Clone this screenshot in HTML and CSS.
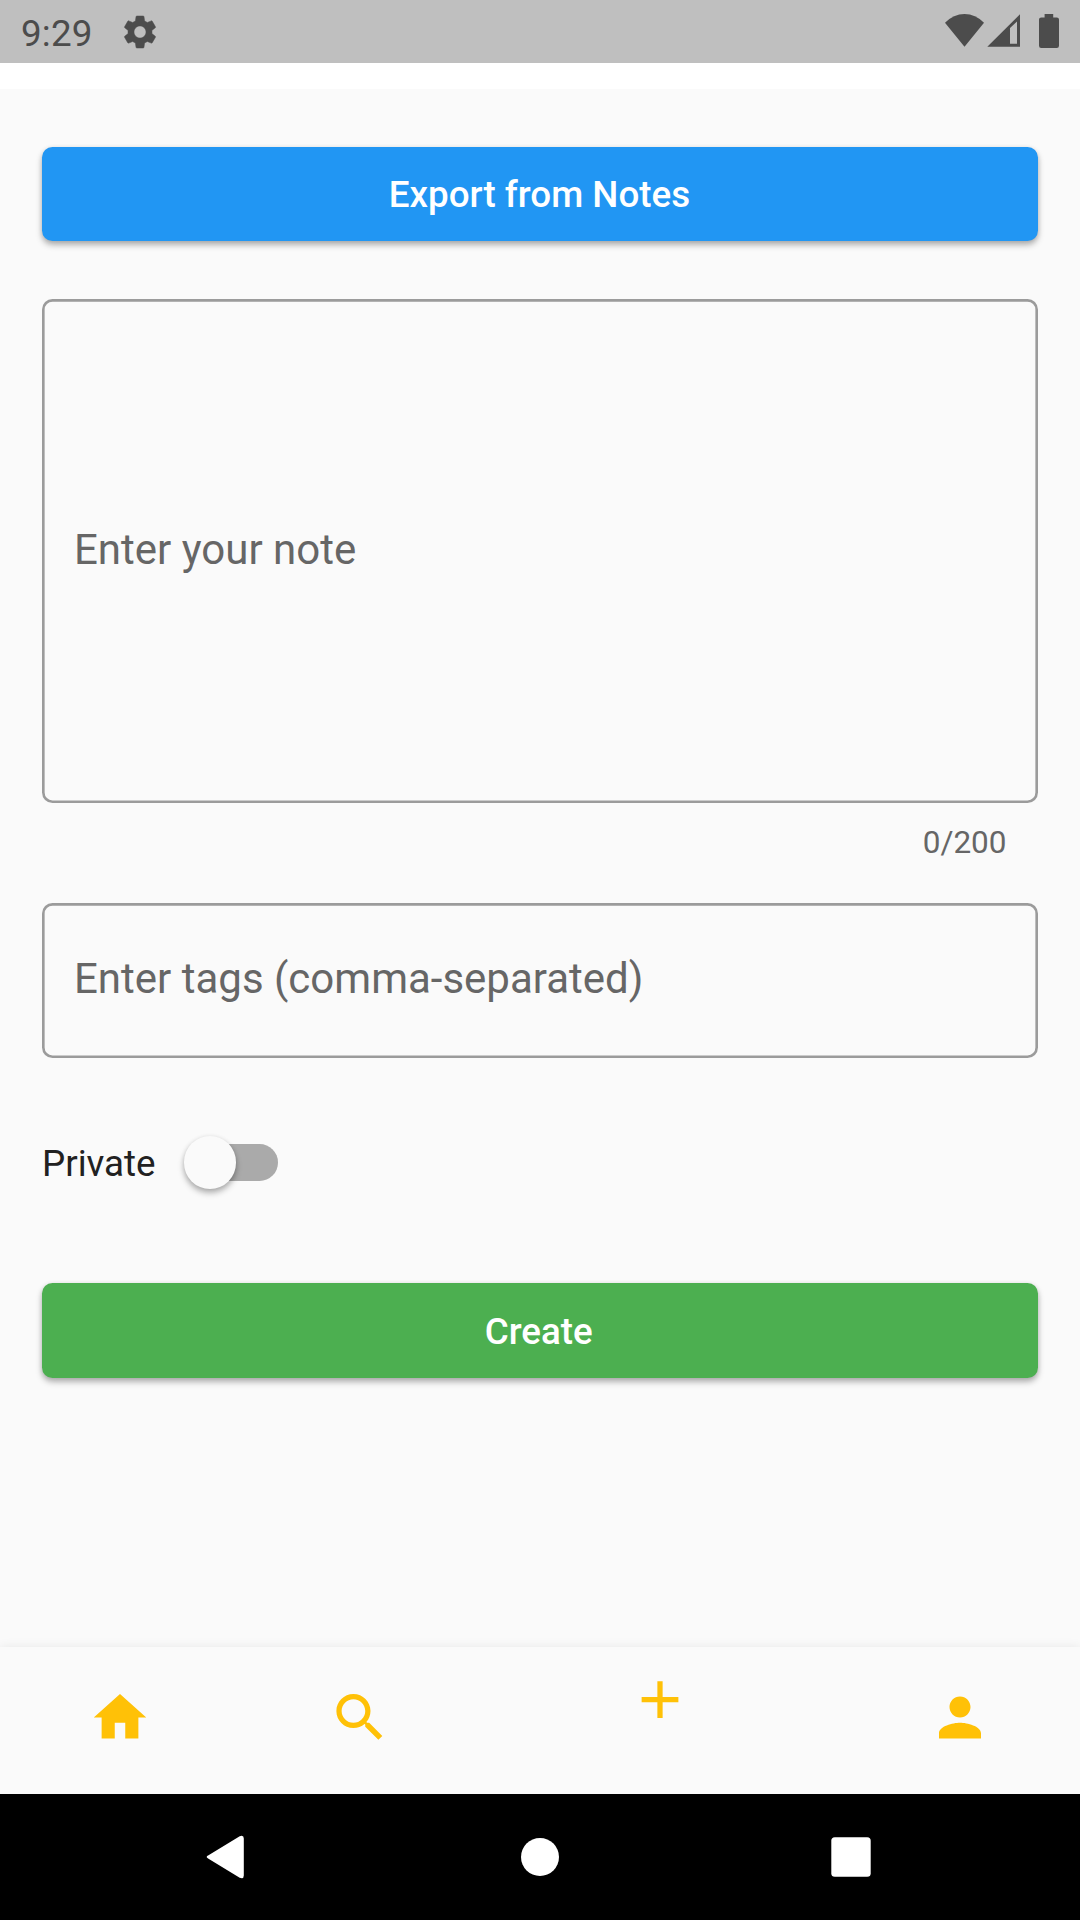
FILE: index.html
```html
<!DOCTYPE html>
<html lang="en">
<head>
<meta charset="utf-8">
<title>Create note</title>
<link rel="stylesheet" href="styles.css">
</head>
<body>
<div class="screen">
  <header class="status">
    <span class="clock">9:29</span>
    <svg class="gear" viewBox="0 0 24 24"><path d="M19.14 12.94c.04-.3.06-.61.06-.94 0-.32-.02-.64-.07-.94l2.03-1.58c.18-.14.23-.41.12-.61l-1.92-3.32c-.12-.22-.37-.29-.59-.22l-2.39.96c-.5-.38-1.03-.7-1.62-.94l-.36-2.54c-.04-.24-.24-.41-.48-.41h-3.84c-.24 0-.43.17-.47.41l-.36 2.54c-.59.24-1.13.57-1.62.94l-2.39-.96c-.22-.08-.47 0-.59.22L2.74 8.87c-.12.21-.08.47.12.61l2.03 1.58c-.05.3-.09.63-.09.94s.02.64.07.94l-2.03 1.58c-.18.14-.23.41-.12.61l1.92 3.32c.12.22.37.29.59.22l2.39-.96c.5.38 1.03.7 1.62.94l.36 2.54c.05.24.24.41.48.41h3.84c.24 0 .44-.17.47-.41l.36-2.54c.59-.24 1.13-.56 1.62-.94l2.39.96c.22.08.47 0 .59-.22l1.92-3.32c.12-.22.07-.47-.12-.61l-2.01-1.58zM12 15.6c-1.98 0-3.6-1.62-3.6-3.6s1.62-3.6 3.6-3.6 3.6 1.62 3.6 3.6-1.62 3.6-3.6 3.6z"/></svg>
    <svg class="system" viewBox="0 0 116 36">
      <path d="M0 9.8Q8.5 1 19.5 1T39 9.8L19.5 33.7Z"/>
      <path fill-rule="evenodd" d="M42.3 33.8L75 1.3V33.8ZM65 15V30.7H72V8.4Z"/>
      <path d="M99.6 1h8.6v3.4h3.6q2.2 0 2.2 2.2v26.2q0 2.2-2.2 2.2H96.2q-2.2 0-2.2-2.2V6.6q0-2.2 2.2-2.2h3.4z"/>
    </svg>
  </header>
  <div class="strip"></div>
  <main class="content">
    <button class="btn btn-export" type="button">Export from Notes</button>
    <div class="field field-note">Enter your note</div>
    <div class="counter">0/200</div>
    <div class="field field-tags">Enter tags (comma-separated)</div>
    <div class="private">
      <span class="private-label">Private</span>
      <span class="switch"><span class="knob"></span></span>
    </div>
    <button class="btn btn-create" type="button">Create</button>
  </main>
  <nav class="tabs">
    <svg viewBox="0 0 24 24"><path d="M10 20v-6h4v6h5v-8h3L12 3 2 12h3v8z"/></svg>
    <svg viewBox="0 0 24 24"><path d="M15.5 14h-.79l-.28-.27C15.41 12.59 16 11.11 16 9.5 16 5.91 13.09 3 9.5 3S3 5.91 3 9.5 5.91 16 9.5 16c1.61 0 3.09-.59 4.23-1.57l.27.28v.79l5 4.99L20.49 19l-4.99-5zm-6 0C7.01 14 5 11.99 5 9.5S7.01 5 9.5 5 14 7.01 14 9.5 11.99 14 9.5 14z"/></svg>
    <svg class="add" viewBox="0 0 24 24"><path d="M19 13h-6v6h-2v-6H5v-2h6V5h2v6h6v2z"/></svg>
    <svg viewBox="0 0 24 24"><path d="M12 12c2.21 0 4-1.79 4-4s-1.79-4-4-4-4 1.79-4 4 1.79 4 4 4zm0 2c-2.67 0-8 1.34-8 4v2h16v-2c0-2.66-5.33-4-8-4z"/></svg>
  </nav>
  <footer class="system-nav">
    <svg viewBox="0 0 48 48"><path d="M5.5 22.3L36.7 3.3Q40.8 1.7 40.8 5.5V42.5Q40.8 46.3 36.7 44.7L5.5 25.7Q1.8 24 5.5 22.3Z"/></svg>
    <svg class="home" viewBox="0 0 48 48"><circle cx="24" cy="24" r="19"/></svg>
    <svg viewBox="0 0 48 48"><rect x="4.3" y="4.2" width="39.4" height="39.6" rx="3.5"/></svg>
  </footer>
</div>
</body>
</html>
```
FILE: styles.css
```css
* { box-sizing: border-box; }

body {
  margin: 0;
  background: #fafafa;
  font-family: Roboto, "Liberation Sans", sans-serif;
}

.screen {
  display: flex;
  flex-direction: column;
  width: 1080px;
  height: 1920px;
  overflow: hidden;
}

.status {
  display: flex;
  align-items: center;
  flex: none;
  height: 63px;
  padding: 0 19px 0 21px;
  background: #bfbfbf;
  color: #4c4c4c;
  fill: #4c4c4c;
}

.clock {
  width: 99px;
  padding-top: 4px;
  font-size: 36.75px;
  line-height: 44px;
  letter-spacing: .2px;
}

.gear {
  width: 40px;
  height: 40px;
  stroke: #4c4c4c;
  stroke-width: .3;
}

.system {
  width: 116px;
  height: 36px;
  margin-left: auto;
  margin-top: -1px;
}

.strip {
  flex: none;
  height: 26px;
  background: #fff;
}

.content {
  display: flex;
  flex-direction: column;
  flex: 1;
  padding: 57.75px 42px 0;
  color: #212121;
}

.btn {
  flex: none;
  height: 94.5px;
  padding: 2px 1px 0 0;
  border: 0;
  border-radius: 10.5px;
  color: #fff;
  font: 500 36.75px/44px Roboto, "Liberation Sans", sans-serif;
  box-shadow: 0 4px 6px rgba(0, 0, 0, .28), 0 1px 5px rgba(0, 0, 0, .1);
}

.btn-export { background: #2196f3; }

.btn-create {
  margin-top: 57.75px;
  padding-right: 2.5px;
  background: #4caf50;
}

.field {
  display: flex;
  align-items: center;
  flex: none;
  padding: 0 0 2px 32px;
  border-radius: 10.5px;
  box-shadow: inset 0 0 0 2.625px #9b9b9b;
  color: #666;
  font-size: 42px;
  line-height: 50px;
}

.field-note { height: 504px; margin-top: 57.75px; }
.field-tags { height: 154.9px; }

.counter {
  height: 99.75px;
  padding: 21px 31.5px 0 0;
  color: #666;
  font-size: 31.5px;
  line-height: 38px;
  text-align: right;
}

.private {
  display: flex;
  align-items: center;
  flex: none;
  gap: 36px;
  height: 126px;
  margin-top: 42px;
  font-size: 36.75px;
  line-height: 44px;
}

.private-label { padding-top: 2px; }

.switch {
  display: flex;
  align-items: center;
  width: 86.6px;
  height: 36.75px;
  border-radius: 18.4px;
  background: #aaa;
}

.knob {
  flex: none;
  width: 52.5px;
  height: 52.5px;
  margin-left: -7.9px;
  border-radius: 50%;
  background: #fafafa;
  box-shadow: 0 4px 6px rgba(0, 0, 0, .28), 0 1px 5px rgba(0, 0, 0, .1);
}

.tabs {
  display: grid;
  grid-template-columns: 240px 240px 360px 240px;
  justify-items: center;
  align-items: start;
  flex: none;
  height: 147.3px;
  padding-top: 39.3px;
  background: #fafafa;
  fill: #ffc107;
  box-shadow: 0 0 10px rgba(0, 0, 0, .08);
}

.tabs svg { width: 64px; height: 63px; }
.tabs .add { margin-top: -18px; }

.system-nav {
  display: flex;
  align-items: center;
  justify-content: space-between;
  flex: none;
  height: 126px;
  padding: 0 205px 0 203px;
  background: #000;
  fill: #fff;
}

.system-nav svg { width: 48px; height: 48px; }
.system-nav .home { margin-left: 2px; }
```
